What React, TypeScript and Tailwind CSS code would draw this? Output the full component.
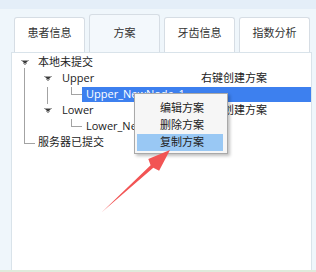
const FONT = "font-['Open_Sans','Noto_Sans_CJK_SC',sans-serif]";
const LINE = '#a3a3a3';

const TABS = [
  { label: '患者信息', active: false },
  { label: '方案', active: true },
  { label: '牙齿信息', active: false },
  { label: '指数分析', active: false },
];

function Tri({ x }: { x: number }) {
  return <polygon points={`${x},6 ${x + 8},6 ${x + 4},10.5`} fill="#3a3a3a" />;
}

function Branch({ w, children }: { w: number; children: React.ReactNode }) {
  return (
    <svg width={w} height={16} className="shrink-0" shapeRendering="crispEdges">
      <g stroke={LINE} strokeWidth={1}>{children}</g>
    </svg>
  );
}

function Note() {
  return <span className="text-[11px] text-[#222]">右键创建方案</span>;
}

export default function App() {
  return (
    <div className={`relative w-[316px] h-[272px] bg-[#eff6fb] flex flex-col overflow-hidden ${FONT}`}>
      <div className="h-[9px] bg-[#e4eef8]" />
      <div className="h-[43px] flex items-end gap-[4px] pl-[14px]">
        {TABS.map((t) =>
          t.active ? (
            <div
              key={t.label}
              className="w-[71px] h-[38px] flex items-center justify-center border border-b-0 border-[#d6dde4] rounded-t-[3px] bg-[#f3f8fc] text-[11px] text-[#333]"
            >
              {t.label}
            </div>
          ) : (
            <div
              key={t.label}
              className="w-[71px] h-[35px] flex items-center justify-center pb-[3px] border border-b-0 border-[#d6dde4] rounded-t-[3px] bg-white text-[11px] text-[#333]"
            >
              {t.label}
            </div>
          ),
        )}
      </div>
      <div className="ml-[11px] w-[301px] h-[218px] bg-white border border-b-0 border-[#d9e3ea] pt-[1px]">
        {/* 本地未提交 */}
        <div className="h-[16px] flex items-center">
          <Branch w={24}>
            <Tri x={9} />
            <line x1={12.5} y1={14} x2={12.5} y2={16} />
          </Branch>
          <span className="pl-[2px] text-[11px] text-[#222]">本地未提交</span>
        </div>
        {/* Upper */}
        <div className="h-[16px] flex items-center">
          <Branch w={48}>
            <line x1={12.5} y1={0} x2={12.5} y2={16} />
            <Tri x={32} />
          </Branch>
          <span className="pl-[2px] w-[141px] text-[11px] text-[#222]">Upper</span>
          <Note />
        </div>
        {/* Upper_NewNode_1 */}
        <div className="h-[16px] flex items-center">
          <Branch w={70}>
            <line x1={12.5} y1={0} x2={12.5} y2={16} />
            <line x1={35.5} y1={1} x2={35.5} y2={16} />
            <line x1={59.5} y1={1} x2={59.5} y2={8} />
            <line x1={59} y1={8.5} x2={70} y2={8.5} />
          </Branch>
          <div className="flex-1 h-[15px] mt-[1px] flex items-center pl-[4px] bg-[#3d80ef] text-[11px] text-white">
            Upper_NewNode_1
          </div>
        </div>
        {/* Lower */}
        <div className="h-[16px] flex items-center">
          <Branch w={48}>
            <line x1={12.5} y1={0} x2={12.5} y2={16} />
            <line x1={35.5} y1={0} x2={35.5} y2={2} />
            <Tri x={32} />
          </Branch>
          <span className="pl-[2px] w-[141px] text-[11px] text-[#222]">Lower</span>
          <Note />
        </div>
        {/* Lower_NewNode_1 */}
        <div className="h-[16px] flex items-center">
          <Branch w={70}>
            <line x1={12.5} y1={0} x2={12.5} y2={16} />
            <line x1={59.5} y1={1} x2={59.5} y2={8} />
            <line x1={59} y1={8.5} x2={70} y2={8.5} />
          </Branch>
          <span className="pl-[4px] text-[11px] text-[#222]">Lower_NewNode_1</span>
        </div>
        {/* 服务器已提交 */}
        <div className="h-[16px] flex items-center">
          <Branch w={24}>
            <line x1={12.5} y1={0} x2={12.5} y2={9} />
            <line x1={12} y1={9.5} x2={23} y2={9.5} />
          </Branch>
          <span className="pl-[2px] text-[11px] text-[#222]">服务器已提交</span>
        </div>
      </div>
      <div className="h-[2px] bg-[#dfeadb]" />

      {/* context menu */}
      <div className="absolute left-[134px] top-[93px] w-[94px] bg-[#f6f6f6] border border-[#a9a9a9] pt-[6px] pb-[2px] shadow-[2px_2px_3px_rgba(0,0,0,0.25)]">
        {['编辑方案', '删除方案', '复制方案'].map((m, i) => (
          <div
            key={m}
            className={`ml-[2px] mr-[4px] h-[17px] flex items-center pl-[23px] text-[11px] text-[#222] ${
              i === 2 ? 'bg-[#99c8f4]' : ''
            }`}
          >
            {m}
          </div>
        ))}
      </div>

      {/* red arrow */}
      <svg className="absolute inset-0 pointer-events-none" width={316} height={272}>
        <polygon
          points="170,150 148.3,158.9 150.6,165.3 102,212 153.3,167.8 159.1,170.7"
          fill="#f25454"
        />
      </svg>
    </div>
  );
}
